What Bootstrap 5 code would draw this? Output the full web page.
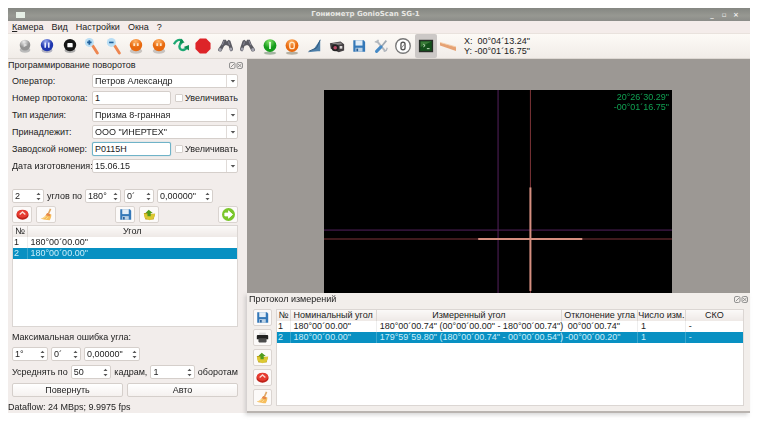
<!DOCTYPE html>
<html lang="ru">
<head>
<meta charset="utf-8">
<meta name="viewport" content="width=device-width, initial-scale=1">
<title>Гониометр GonioScan SG-1</title>
<link href="https://cdn.jsdelivr.net/npm/bootstrap@5.3.0/dist/css/bootstrap.min.css" rel="stylesheet">
<style>
  body { font: 9px/12px "Liberation Sans", Arial, sans-serif; color: #222; background: #fff; padding: 8px 8px 9px; }
  button, input, select { font: inherit; color: inherit; }
  .app { background: #f2edeb; }
  .titlebar { background: linear-gradient(#858782, #979892 60%, #8b8c88); height: 13px; color: #e8e8e4; font: bold 7px/13px "DejaVu Sans", sans-serif; }
  .winicon { width: 9px; height: 6px; background: #e6efe6; }
  .titlebar button { border: 0; background: none; padding: 0; width: 12px; color: #eee; line-height: 12px; }
  .menubar { height: 12px; gap: 8px; padding-left: 4px; background: #f4ecea; }
  .menubar a { color: #222; text-decoration: none; }
  .toolbar { height: 26px; background: linear-gradient(#fdfaf6, #f1ece8); border-top: 1px solid #e9e2dd; border-bottom: 1px solid #ddd8d3; padding-left: 6px; }
  .tools { display: grid; grid-template-columns: repeat(20, 1fr); width: 445px; }
  .tools button { border: 0; background: none; padding: 0; height: 24px; }
  .tools button.on { background: #ccc8c6; border-radius: 2px; }
  .tools svg { width: 16px; height: 18px; display: block; margin: auto; }
  .coords { line-height: 10px; padding-left: 5px; white-space: pre; }
  .workspace { display: grid; grid-template-columns: 239px minmax(0, 1fr); min-height: calc(100vh - 68px); }
  .side { padding: 0 9px 0 4px; }
  .docktitle { height: 12px; }
  .side .docktitle { margin: 0 -5px 3px -4px; }
  .form { display: grid; grid-template-columns: 80px minmax(0, 1fr); row-gap: 3px; }
  .form label, .spins, .spins label { line-height: 14px; white-space: nowrap; }
  .field { height: 14px; border: 1px solid #d5cfcb; border-radius: 2px; background: #fff; padding: 0 2px; line-height: 12px; width: 100%; min-width: 0; }
  .field:focus, .field.active { border: 1px solid #6fb3c8; box-shadow: 0 0 1px #6fb3c8; outline: 0; }
  .narrow { width: 80px; }
  select.field { appearance: none; }
  .combo { position: relative; }
  .combo svg { position: absolute; right: 0; top: 1px; width: 12px; height: 12px; border-left: 1px solid #e0dbd8; pointer-events: none; }
  .tick { appearance: none; width: 8px; height: 8px; border: 1px solid #d5cfcb; border-radius: 1px; background: #fff; margin: 0 2px 0 4px; }
  .spins { gap: 3px; }
  .spin { display: flex; height: 14px; border: 1px solid #d5cfcb; border-radius: 2px; background: #fff; }
  .spin input { border: 0; background: none; flex: 1; min-width: 0; width: 0; padding: 0 0 0 2px; line-height: 12px; }
  .spin button { border: 0; background: none; padding: 0; width: 9px; line-height: 0; }
  .spin svg { width: 5px; height: 9px; }
  .w30 { width: 30px; } .w32 { width: 32px; } .w36 { width: 36px; } .w42 { width: 42px; } .w46 { width: 46px; } .w56 { width: 56px; }
  .iconrow { margin: 3px 0 2px; }
  .iconbtn { width: 20px; height: 17px; border: 1px solid #dad4d0; border-radius: 2px; background: #fcfaf9; padding: 0; display: grid; place-items: center; }
  .iconbtn svg { width: 13px; height: 13px; }
  .push { height: 14px; border: 1px solid #d5cfcb; border-radius: 2px; background: linear-gradient(#fff, #f5f1ef); padding: 0; line-height: 12px; flex: 1; }
  .listbox { background: #fff; border: 1px solid #dbd6d3; }
  .grid { width: 100%; table-layout: fixed; line-height: 11px; white-space: pre; }
  .grid th { font-weight: normal; text-align: center; background: linear-gradient(#fbf9f8, #eee9e6); border-right: 1px solid #ddd8d4; padding: 0; height: 11px; }
  .grid td { padding: 0 0 0 3px; border-right: 1px solid #eee; height: 11px; }
  .grid td:first-child { padding-left: 1px; }
  .grid .sel td { background: #0890c2; color: #cbeefa; border-color: #3ba6cc; }
  .grid th:last-child, .grid td:last-child { border-right: 0; }
  .rightside { background: #9c9894; min-width: 0; }
  .camera { padding: 31px 15.5% 0 15.3%; flex: 1; display: flex; }
  .frame { background: #000; flex: 1; position: relative; }
  .frame svg { position: absolute; width: 100%; height: 100%; }
  .readout { position: absolute; right: 3px; top: 2px; color: #10a052; line-height: 10px; text-align: right; }
  .protocol { background: #f2eeeb; padding: 0 6px 5px 2px; border-bottom: 2px solid #b9b4b0; box-shadow: -2px 2px 4px #8885; }
  .protocol .docktitle { margin-right: -4px; margin-bottom: 4px; }
  .protocol .iconbtn { width: 19px; }
  .btncol { gap: 3px; margin: 0 4px; }
  .dockbtns svg { width: 14px; height: 7px; }
</style>
</head>
<body>
<svg width="0" height="0" class="position-absolute" aria-hidden="true">
  <defs>
    <radialGradient id="gr" cx=".4" cy=".2"><stop offset="0" stop-color="#eee"/><stop offset="1" stop-color="#929292"/></radialGradient>
    <radialGradient id="bl" cx=".4" cy=".2"><stop offset="0" stop-color="#93a4ec"/><stop offset="1" stop-color="#1f36ae"/></radialGradient>
    <radialGradient id="or" cx=".45" cy=".2"><stop offset="0" stop-color="#ffb163"/><stop offset="1" stop-color="#e8690f"/></radialGradient>
    <radialGradient id="gn" cx=".45" cy=".2"><stop offset="0" stop-color="#8be66f"/><stop offset="1" stop-color="#159b1b"/></radialGradient>
  </defs>
  <symbol id="disk" viewBox="0 0 16 16"><path d="M1.5 1.5h12l1.5 2v11h-13.500z" fill="#3478b8"/><path d="M4 1.500h8v6h-8z" fill="#e2edf7"/><path d="M4 10h8v4.500h-8z" fill="#bcd2e6"/><path d="M5 11h2v3h-2z" fill="#245c96"/></symbol>
  <symbol id="stop" viewBox="0 0 16 16"><ellipse cx="8" cy="8.500" rx="7.500" ry="6" fill="#bd2118"/><ellipse cx="8" cy="7" rx="7" ry="5" fill="#e63b30"/><path d="M4.500 8 8 5l3.500 3" stroke="#fbd8d0" stroke-width="1.800" fill="none"/></symbol>
  <symbol id="broom" viewBox="0 0 16 16"><path d="m13 1-3 7" stroke="#e0a764" stroke-width="2"/><path d="M9 6c1 1 3 1 5 2 0 3-1 5-2 7-4 0-8-.5-11-2 4-1 6-4 8-7z" fill="#f6bd5c"/><path d="m9 6 4 2-1 2-5-1z" fill="#e5864a"/><path d="m3 13 5-3M7 14l3-3" stroke="#fbe0a0"/></symbol>
  <symbol id="open" viewBox="0 0 16 16"><path d="M1 6h5l1 1h8l-2 7h-10z" fill="#b79a18"/><path d="m1 7 7 1 7-1-2 6-5 2-6-3z" fill="#dcc832"/><path d="M7 2l5 4h-2.500v4h-4V6H3z" fill="#4f9b1c"/></symbol>
  <symbol id="printer" viewBox="0 0 16 16"><path d="M4 2h8v4h-8z" fill="#ddd"/><path d="M1 6q0-1 1-1h12q1 0 1 1v4h-14z" fill="#222"/><path d="M3 9h10v4q0 1-1 1h-8q-1 0-1-1z" fill="#4b4b4b"/></symbol>
  <symbol id="bino" viewBox="0 0 18 20"><path d="M7 3h3l1 2 2-2 2 1 3 9q0 3-3 3l-2-6-3-1-2 1-3 6q-4 1-4-2l4-6z" fill="#5b5b63"/><circle cx="3.500" cy="14" r="1.800" fill="#a3a3ad"/><circle cx="15.500" cy="13.500" r="1.800" fill="#a3a3ad"/><path d="m8 4-2 5M13 5l1 4" stroke="#9292a0"/></symbol>
  <symbol id="face" viewBox="0 0 18 20"><ellipse cx="9" cy="15.500" rx="7" ry="3.200" fill="#c8c3bf"/><circle cx="9" cy="9" r="7" fill="url(#or)"/><path d="M7 7v3M11 7v3" stroke="#ffe7ca" stroke-width="2"/></symbol>
  <symbol id="arrows" viewBox="0 0 5 9"><path d="M.5 3 2.500.8 4.500 3zM.5 6l2 2.200 2-2.200z" fill="#555"/></symbol>
  <symbol id="down" viewBox="0 0 12 12"><path d="M4 5h5l-2.500 2.500z" fill="#555"/></symbol>
  <symbol id="dock" viewBox="0 0 14 7"><g fill="none" stroke="#888" stroke-width=".9"><rect x=".5" y=".5" width="5.500" height="6" rx="1.500"/><rect x="8" y=".5" width="5.500" height="6" rx="1.500"/><path d="m2 5 3-3M9 2l3.500 3M12.500 2 9 5"/></g></symbol>
</svg>

<div class="app">
  <header class="titlebar d-flex align-items-center px-2">
    <span class="winicon"></span><span class="flex-fill text-center">Гониометр GonioScan SG-1</span>
    <button aria-label="Свернуть">_</button><button aria-label="Развернуть">▫</button><button aria-label="Закрыть">×</button>
  </header>
  <nav class="menubar d-flex align-items-center">
    <a href="#"><u>К</u>амера</a><a href="#">Вид</a><a href="#">Настройки</a><a href="#">Окна</a><a href="#">?</a>
  </nav>
  <div class="toolbar d-flex align-items-center">
    <div class="tools">
      <button aria-label="Пуск"><svg viewBox="0 0 18 20"><ellipse cx="9" cy="14.500" rx="6" ry="3" fill="#bbb"/><circle cx="9" cy="9" r="6" fill="url(#gr)"/><path d="m7.500 6.500 4 2.500-4 2.500z" fill="#ddd"/></svg></button>
      <button aria-label="Пауза"><svg viewBox="0 0 18 20"><ellipse cx="9" cy="15" rx="6" ry="3" fill="#b3b3c0"/><circle cx="9" cy="9" r="7" fill="url(#bl)"/><path d="M7 6v6M11 6v6" stroke="#e7ecff" stroke-width="1.800"/></svg></button>
      <button aria-label="Стоп"><svg viewBox="0 0 18 20"><ellipse cx="9" cy="15" rx="6" ry="3" fill="#aaa"/><circle cx="9" cy="9" r="7" fill="#161616"/><rect x="6" y="6.500" width="6" height="5" rx="1" fill="#fff"/></svg></button>
      <button aria-label="Увеличить"><svg viewBox="0 0 18 20"><path d="m10 10 5 8" stroke="#ee8650" stroke-width="3.200" stroke-linecap="round"/><circle cx="6" cy="6" r="5" fill="#b9def4"/><path d="M6 3.500v5M3.500 6h5" stroke="#20609c" stroke-width="2"/></svg></button>
      <button aria-label="Уменьшить"><svg viewBox="0 0 18 20"><path d="m10 10 5 8" stroke="#ee8650" stroke-width="3.200" stroke-linecap="round"/><circle cx="6" cy="6" r="5" fill="#b9def4"/><path d="M3.500 6h5" stroke="#20609c" stroke-width="1.800"/></svg></button>
      <button aria-label="Масштаб 1"><svg><use href="#face"/></svg></button>
      <button aria-label="Масштаб 2"><svg><use href="#face"/></svg></button>
      <button aria-label="Обновить"><svg viewBox="0 0 18 20"><path d="M1 8q4-7 9-4 1 2-2 4-2 4 1 6 4 2 7-3" fill="none" stroke="#1da873" stroke-width="2.600"/><path d="M9 1.500 13 6l-6 1.500z" fill="#0d8f54"/><path d="m12 11 6-2v6z" fill="#0d8f54"/></svg></button>
      <button aria-label="Запись"><svg viewBox="0 0 18 20"><path d="M5.500 1.500h7L17.500 6.500v7l-5 5h-7l-5-5v-7z" fill="#dd2428"/></svg></button>
      <button aria-label="Поиск назад"><svg><use href="#bino"/></svg></button>
      <button aria-label="Поиск вперёд"><svg><use href="#bino" transform="matrix(-1 0 0 1 16 0)"/></svg></button>
      <button aria-label="Включить"><svg viewBox="0 0 18 20"><ellipse cx="9" cy="18" rx="7" ry="1.800" fill="#a4b5a2"/><circle cx="9" cy="9.500" r="7.200" fill="url(#gn)"/><path d="M9 5.500v8" stroke="#e9ffe4" stroke-width="2"/></svg></button>
      <button aria-label="Выключить"><svg viewBox="0 0 18 20"><ellipse cx="9" cy="18" rx="7" ry="1.800" fill="#b5b0a2"/><circle cx="9" cy="9.500" r="7.200" fill="url(#or)"/><rect x="6.500" y="6" width="5" height="7" rx="2.200" fill="none" stroke="#ffe9cb" stroke-width="1.500"/></svg></button>
      <button aria-label="Угол"><svg viewBox="0 0 18 20"><path d="M16 3v13h-3l-11 1 7-4z" fill="#4d7fa9"/><path d="m16 3-4 9-9 4" fill="none" stroke="#2c567b"/></svg></button>
      <button aria-label="Камера"><svg viewBox="0 0 18 20"><path d="m1 7 12-2 4 3v7l-6 2-9-4z" fill="#444042"/><path d="m3 7 10-1 2 2-7 1z" fill="#8a8787"/><circle cx="7" cy="12" r="4" fill="#222"/><circle cx="7" cy="12" r="2" fill="#ba4b67"/><path d="M12 10h3v3h-3z" fill="#dedada"/></svg></button>
      <button aria-label="Сохранить"><svg viewBox="0 0 16 18"><use href="#disk" x="1" y="2" width="14" height="14"/></svg></button>
      <button aria-label="Настройки"><svg viewBox="0 0 18 20"><path d="m4 4 10 12" stroke="#b3b8be" stroke-width="2.200"/><path d="m15 4-5 6" stroke="#9fa9b3" stroke-width="2"/><path d="m9 11-5 5" stroke="#468ac6" stroke-width="3.500" stroke-linecap="round"/><path d="m2 5 3 1 1-3M12 16l3-1 1-3" stroke="#b3b8be" stroke-width="1.500" fill="none"/></svg></button>
      <button aria-label="Обнулить"><svg viewBox="0 0 18 20"><circle cx="9" cy="10" r="8.200" fill="#fff" stroke="#777" stroke-width="1.500"/><rect x="6.700" y="5.800" width="4.600" height="8.400" rx="2.200" fill="none" stroke="#555" stroke-width="1.500"/><path d="m7.500 12 3-4" stroke="#555" stroke-width=".8"/></svg></button>
      <button class="on" aria-label="Монитор"><svg viewBox="0 0 18 20"><rect x="1" y="3" width="16" height="14" fill="#262c26"/><rect x="2.500" y="4.500" width="13" height="11" fill="#14501b"/><path d="M3 5h12L3 11z" fill="#397b37"/><path d="m6 8 2 1.500L6 11M10 13h3" fill="none" stroke="#d7efd4"/></svg></button>
      <button aria-label="Линейка"><svg viewBox="0 0 18 20"><path d="m0 6 18 5v4.500L0 9.500z" fill="#e6a274"/><path d="m0 6 18 5" stroke="#f4cda9"/></svg></button>
    </div>
    <div class="coords">X:  00°04´13.24"
Y: -00°01´16.75"</div>
  </div>

  <main class="workspace">
    <section class="side d-flex flex-column">
      <div class="docktitle d-flex align-items-center justify-content-between"><span>Программирование поворотов</span><span class="dockbtns d-flex"><svg><use href="#dock"/></svg></span></div>
      <div class="form">
        <label for="op">Оператор:</label><div class="combo"><select class="field" id="op"><option>Петров Александр</option></select><svg><use href="#down"/></svg></div>
        <label for="num">Номер протокола:</label><div class="d-flex align-items-center"><input class="field narrow" id="num" value="1"><input class="tick" type="checkbox" id="i1"><label for="i1">Увеличивать</label></div>
        <label for="type">Тип изделия:</label><div class="combo"><select class="field" id="type"><option>Призма 8-гранная</option></select><svg><use href="#down"/></svg></div>
        <label for="own">Принадлежит:</label><div class="combo"><select class="field" id="own"><option>ООО "ИНЕРТЕХ"</option></select><svg><use href="#down"/></svg></div>
        <label for="ser">Заводской номер:</label><div class="d-flex align-items-center"><input class="field narrow active" id="ser" value="P0115H" autofocus><input class="tick" type="checkbox" id="i2"><label for="i2">Увеличивать</label></div>
        <label for="date">Дата изготовления:</label><div class="combo"><select class="field" id="date"><option>15.06.15</option></select><svg><use href="#down"/></svg></div>
      </div>
      <div class="spins d-flex mt-3">
        <span class="spin w32"><input id="cnt" value="2"><button aria-label="Изменить"><svg><use href="#arrows"/></svg></button></span>
        <label for="cnt">углов по</label>
        <span class="spin w36"><input aria-label="Градусы" value="180°"><button aria-label="Изменить"><svg><use href="#arrows"/></svg></button></span>
        <span class="spin w30"><input aria-label="Минуты" value="0´"><button aria-label="Изменить"><svg><use href="#arrows"/></svg></button></span>
        <span class="spin w56"><input aria-label="Секунды" value="0,00000&quot;"><button aria-label="Изменить"><svg><use href="#arrows"/></svg></button></span>
      </div>
      <div class="iconrow d-flex justify-content-between">
        <div class="d-flex gap-1"><button class="iconbtn" aria-label="Удалить"><svg><use href="#stop"/></svg></button><button class="iconbtn" aria-label="Очистить"><svg><use href="#broom"/></svg></button></div>
        <div class="d-flex gap-1"><button class="iconbtn" aria-label="Сохранить"><svg><use href="#disk"/></svg></button><button class="iconbtn" aria-label="Открыть"><svg><use href="#open"/></svg></button></div>
        <button class="iconbtn" aria-label="Добавить"><svg viewBox="0 0 16 16"><circle cx="8" cy="8" r="8" fill="#7ac62a"/><path d="M3.500 6.200H8V3.500L13 8l-5 4.500V9.800H3.500z" fill="#fff" stroke="#fff" stroke-linejoin="round"/></svg></button>
      </div>
      <div class="listbox flex-fill">
        <table class="grid"><colgroup><col style="width:14px"><col></colgroup>
          <thead><tr><th>№</th><th>Угол</th></tr></thead>
          <tbody><tr><td>1</td><td>180°00´00.00"</td></tr><tr class="sel"><td>2</td><td>180°00´00.00"</td></tr></tbody></table>
      </div>
      <div class="mt-1">Максимальная ошибка угла:</div>
      <div class="spins d-flex my-1">
        <span class="spin w36"><input aria-label="Градусы ошибки" value="1°"><button aria-label="Изменить"><svg><use href="#arrows"/></svg></button></span>
        <span class="spin w30"><input aria-label="Минуты ошибки" value="0´"><button aria-label="Изменить"><svg><use href="#arrows"/></svg></button></span>
        <span class="spin w56"><input aria-label="Секунды ошибки" value="0,00000&quot;"><button aria-label="Изменить"><svg><use href="#arrows"/></svg></button></span>
      </div>
      <div class="spins d-flex justify-content-between">
        <label for="avg">Усреднять по</label>
        <span class="spin w42"><input id="avg" value="50"><button aria-label="Изменить"><svg><use href="#arrows"/></svg></button></span>
        <label for="rev">кадрам,</label>
        <span class="spin w46"><input id="rev" value="1"><button aria-label="Изменить"><svg><use href="#arrows"/></svg></button></span>
        <span>оборотам</span>
      </div>
      <div class="d-flex gap-1 my-1"><button class="push">Повернуть</button><button class="push">Авто</button></div>
      <div class="docktitle mb-0">Dataflow: 24 MBps; 9.9975 fps</div>
    </section>

    <section class="rightside d-flex flex-column">
      <div class="camera"><div class="frame">
        <svg>
          <line x1="50%" x2="50%" y1="0" y2="100%" stroke="#54215e"/><line x1="0" x2="100%" y1="69%" y2="69%" stroke="#54215e"/>
          <line x1="59.300%" x2="59.300%" y1="0" y2="100%" stroke="#7e3438"/><line x1="0" x2="100%" y1="73.400%" y2="73.400%" stroke="#7e3438"/>
          <line x1="44.300%" x2="74.200%" y1="73.400%" y2="73.400%" stroke="#d58f80" stroke-width="2"/><line x1="59.300%" x2="59.300%" y1="48%" y2="99%" stroke="#d58f80" stroke-width="2"/>
        </svg>
        <div class="readout">20°26´30.29"<br>-00°01´16.75"</div>
      </div></div>
      <div class="protocol">
        <div class="docktitle d-flex align-items-center justify-content-between"><span>Протокол измерений</span><span class="dockbtns d-flex"><svg><use href="#dock"/></svg></span></div>
        <div class="d-flex">
          <div class="btncol d-flex flex-column">
            <button class="iconbtn" aria-label="Сохранить протокол"><svg><use href="#disk"/></svg></button>
            <button class="iconbtn" aria-label="Печать"><svg><use href="#printer"/></svg></button>
            <button class="iconbtn" aria-label="Открыть протокол"><svg><use href="#open"/></svg></button>
            <button class="iconbtn" aria-label="Удалить измерение"><svg><use href="#stop"/></svg></button>
            <button class="iconbtn" aria-label="Очистить протокол"><svg><use href="#broom"/></svg></button>
          </div>
          <div class="listbox flex-fill">
            <table class="grid"><colgroup><col style="width:13px"><col style="width:18.500%"><col style="width:39.800%"><col style="width:16.300%"><col style="width:10.200%"><col></colgroup>
              <thead><tr><th>№</th><th>Номинальный угол</th><th>Измеренный угол</th><th>Отклонение угла</th><th>Число изм.</th><th>СКО</th></tr></thead>
              <tbody>
                <tr><td>1</td><td>180°00´00.00"</td><td>180°00´00.74" (00°00´00.00" - 180°00´00.74")</td><td> 00°00´00.74"</td><td>1</td><td>-</td></tr>
                <tr class="sel"><td>2</td><td>180°00´00.00"</td><td>179°59´59.80" (180°00´00.74" - 00°00´00.54")</td><td>-00°00´00.20"</td><td>1</td><td>-</td></tr>
              </tbody></table>
          </div>
        </div>
      </div>
    </section>
  </main>
</div>
<script src="https://cdn.jsdelivr.net/npm/bootstrap@5.3.0/dist/js/bootstrap.bundle.min.js"></script>
</body>
</html>
